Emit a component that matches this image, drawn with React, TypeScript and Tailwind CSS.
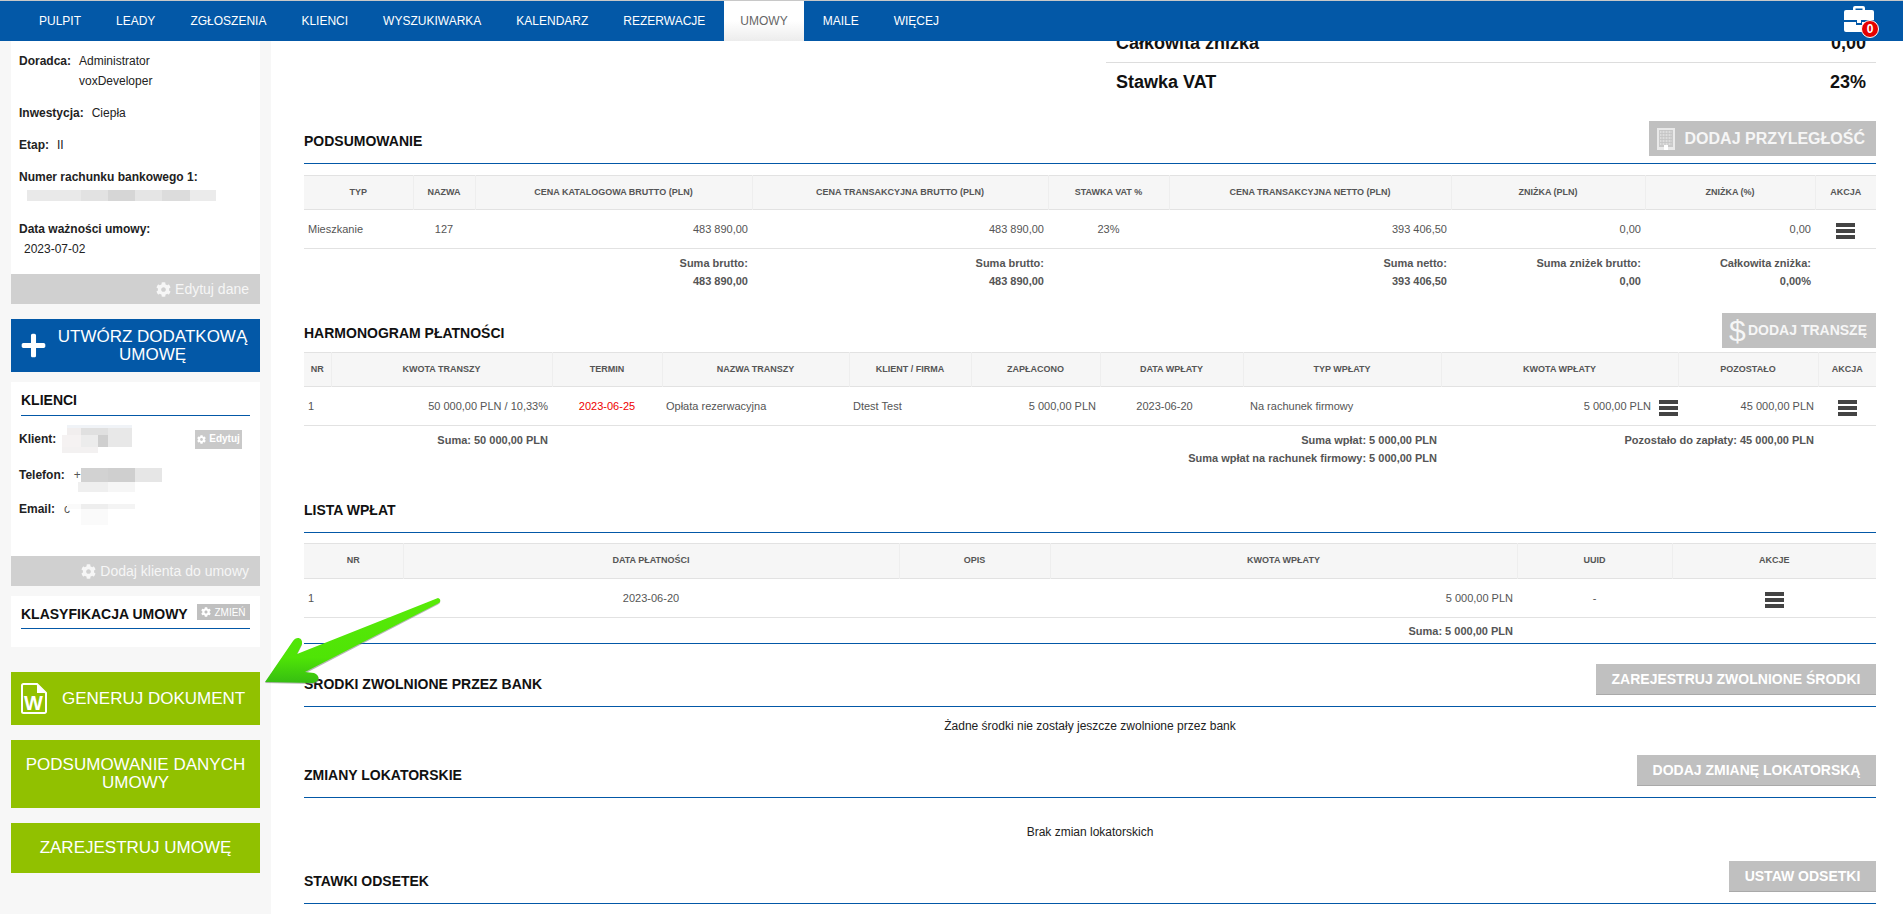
import React from 'react';
import { FaCog, FaPlus } from 'react-icons/fa';

const navItems = ['PULPIT', 'LEADY', 'ZGŁOSZENIA', 'KLIENCI', 'WYSZUKIWARKA', 'KALENDARZ', 'REZERWACJE', 'UMOWY', 'MAILE', 'WIĘCEJ'];

type Cell = [number, string];

const Mosaic = ({ rows, className }: { rows: [number, Cell[]][]; className: string }) => (
  <div className={className}>
    {rows.map(([h, cells], i) => (
      <div key={i} className="flex" style={{ height: h }}>
        {cells.map(([w, color], j) => (
          <div key={j} style={{ width: w, background: color }} />
        ))}
      </div>
    ))}
  </div>
);

const Bars = () => (
  <svg width="19" height="16" viewBox="0 0 19 16" className="inline-block mt-[4px]" fill="#444444">
    <rect y="0" width="19" height="4" />
    <rect y="6" width="19" height="4" />
    <rect y="12" width="19" height="4" />
  </svg>
);

const Th = ({ className, children }: { className: string; children?: React.ReactNode }) => (
  <th className={`bg-[#f6f6f6] border-x border-[#eeeeee] first:border-l-0 last:border-r-0 px-1 text-center align-middle text-[9px] font-bold text-[#555555] ${className}`}>
    {children}
  </th>
);

const Td = ({ className = '', children }: { className?: string; children?: React.ReactNode }) => (
  <td className={`px-1 align-middle ${className}`}>{children}</td>
);

// footer cell of a table, text starts at the top
const Foot = ({ colSpan, children }: { colSpan?: number; children?: React.ReactNode }) => (
  <td colSpan={colSpan} className="px-1 pt-[5px] align-top">{children}</td>
);

const Heading = ({ children }: { children: React.ReactNode }) => (
  <h2 className="mt-[10px] text-[14px] leading-5 font-bold text-[#111111] whitespace-nowrap">{children}</h2>
);

const GrayButton = ({ className, children }: { className: string; children: React.ReactNode }) => (
  <div className={`h-[31px] flex items-center justify-center bg-[#c0c0c0] border-b border-[#a9a9a9] text-white text-[14px] font-bold whitespace-nowrap ${className}`}>
    {children}
  </div>
);

const SideButton = ({ children }: { children: React.ReactNode }) => (
  <div className="h-[30px] pt-[1px] pr-[11px] flex items-center justify-end gap-[4px] bg-[#d0d0d0] text-[#f6f6f6] text-[14px]">
    <FaCog className="w-[15px] h-[15px]" />
    {children}
  </div>
);

const Briefcase = () => (
  <div className="relative w-[36px] h-[32px]">
    <svg width="30" height="26" viewBox="0 0 30 26" className="absolute left-[1px] top-[5px]">
      <path d="M9 5V2a2 2 0 0 1 2-2h8a2 2 0 0 1 2 2v3h-2.500V2.500h-7V5z" fill="#ffffff" />
      <path d="M2 4h26a2 2 0 0 1 2 2v8H0V6a2 2 0 0 1 2-2z" fill="#ffffff" />
      <path d="M0 16h12v3h6v-3h12v8a2 2 0 0 1-2 2H2a2 2 0 0 1-2-2z" fill="#ffffff" />
      <rect x="13" y="14" width="4" height="3" fill="#ffffff" />
    </svg>
    <div className="absolute left-[18px] top-[19px] w-[18px] h-[18px] rounded-full bg-[#e60000] border border-white flex items-center justify-center text-white text-[12px] font-bold leading-none">
      0
    </div>
  </div>
);

const BuildingIcon = () => (
  <svg width="18" height="22" viewBox="0 0 18 22" fill="none">
    <path d="M0 0h18v22h-18z" fill="#e9e9e9" />
    <rect x="2" y="2" width="14" height="17" fill="#c9c9c9" />
    <path d="M3 4h12M3 7h12M3 10h12M3 13h12M3 16h12" stroke="#f2f2f2" strokeWidth="1.200" />
    <path d="M5 2v15M8 2v15M11 2v15M14 2v15" stroke="#c4c4c4" strokeWidth="1" />
    <rect x="7" y="17" width="4" height="5" fill="#ffffff" />
  </svg>
);

const WordIcon = () => (
  <div className="relative w-[26px] h-[31px] shrink-0">
    <svg width="26" height="31" viewBox="0 0 26 31" fill="none" className="absolute inset-0">
      <path d="M2.500 1h13.500l9 9v18.500a1.500 1.500 0 0 1-1.500 1.500h-21a1.500 1.500 0 0 1-1.500-1.500v-26a1.500 1.500 0 0 1 1.500-1.500z" stroke="#ffffff" strokeWidth="2" />
      <path d="M16 1.500v8.500h8.500z" fill="#ffffff" />
    </svg>
    <span className="absolute left-[3px] top-[11px] text-white text-[20px] leading-[19px] font-bold">W</span>
  </div>
);

const Arrow = () => (
  <svg width="185" height="95" viewBox="0 0 185 95" className="absolute left-[260px] top-[595px] z-20">
    <defs>
      <linearGradient id="arrowFill" x1="0" y1="0" x2="0" y2="1">
        <stop offset="0" stopColor="#58ea08" />
        <stop offset="0.700" stopColor="#4fe406" />
        <stop offset="1" stopColor="#36bd12" />
      </linearGradient>
    </defs>
    <path d="M178 4 C181 5 181 8 178 9.500 L46 78 L54 79 C61 81 61 88 53 89 L5 88 L33 47 C36 42 43 43 42 50 L37 60z" fill="#7a7a7a" opacity="0.550" />
    <path d="M178 3 C181 4 181 7 178 8.500 L45 77 L54 78 C60 80 60 87 53 88 L5 87 L33 46 C36 41 43 42 42 49 L37 59z" fill="url(#arrowFill)" />
  </svg>
);

const SummaryLines = ({ lines }: { lines: string[] }) => (
  <div className="text-[11px] leading-[18px] font-bold text-[#555555] text-right">
    {lines.map((l) => (
      <div key={l}>{l}</div>
    ))}
  </div>
);

const App = () => {
  return (
    <div className="relative h-[914px] overflow-hidden bg-white font-['Liberation_Sans',sans-serif] text-[12px] text-[#222222]">
      {/* Top menu */}
      <nav className="h-[41px] border-t border-[#c8c8c8] bg-[#0358a7] pl-[23px] pr-[24px] flex items-stretch gap-[3px] text-[12px] text-white relative z-10">
        {navItems.map((item) => (
          <div
            key={item}
            className={
              item === 'UMOWY'
                ? 'px-4 flex items-center bg-gradient-to-b from-white via-white to-[#ececec] text-[#666666]'
                : 'px-4 flex items-center'
            }
          >
            {item}
          </div>
        ))}
        <div className="ml-auto">
          <Briefcase />
        </div>
      </nav>

      <div className="flex h-[873px]">
        {/* Left column */}
        <aside className="w-[271px] shrink-0 bg-[#f7f7f7] px-[11px]">
          <div className="bg-white">
            <div className="pt-[10px] pb-[15px] pl-[8px] leading-5">
              <div className="mb-3">
                <div className="flex">
                  <b className="w-[60px]">Doradca:</b>
                  <span>Administrator</span>
                </div>
                <div className="pl-[60px]">voxDeveloper</div>
              </div>
              <div className="mb-3">
                <b>Inwestycja:</b>
                <span className="ml-[8px]">Ciepła</span>
              </div>
              <div className="mb-3">
                <b>Etap:</b>
                <span className="ml-[8px]">II</span>
              </div>
              <div className="mb-3">
                <b className="block">Numer rachunku bankowego 1:</b>
                <div className="h-5 pt-[3px]">
                  <Mosaic
                    className="ml-[8px]"
                    rows={[
                      [
                        11,
                        [
                          [54, '#e9e9e9'],
                          [27, '#e2e2e2'],
                          [27, '#d6d6d6'],
                          [27, '#e5e5e5'],
                          [28, '#dcdcdc'],
                          [26, '#ebebeb'],
                        ],
                      ],
                    ]}
                  />
                </div>
              </div>
              <div>
                <b className="block">Data ważności umowy:</b>
                <div className="pl-[5px]">2023-07-02</div>
              </div>
            </div>
            <SideButton>Edytuj dane</SideButton>
          </div>

          <div className="mt-[15px] h-[53px] bg-[#0358a7] text-white pl-[9px] pr-[11px] flex items-center gap-[9px]">
            <FaPlus className="w-[27px] h-[27px] shrink-0" />
            <div className="flex-1 text-center text-[17px] leading-[18px] whitespace-nowrap">
              UTWÓRZ DODATKOWĄ
              <br />
              UMOWĘ
            </div>
          </div>

          <div className="mt-[10px] bg-white">
            <div className="h-[174px]">
              <div className="mx-[10px] pt-[8px] pb-[5px] border-b border-[#0358a7] text-[14px] leading-5 font-bold text-[#111111]">KLIENCI</div>
              <div className="relative ml-[8px] mr-[18px] mt-[13px] h-5 leading-5 flex justify-between items-center">
                <b>Klient:</b>
                <Mosaic
                  className="absolute left-[43px] top-[-4px]"
                  rows={[
                    [3, [[5, 'transparent'], [65, '#f0f3f7']]],
                    [7, [[5, 'transparent'], [14, '#f1eeee'], [27, '#e0e0e0'], [24, '#e8e8e8']]],
                    [12, [[19, '#f5f2f2'], [17, '#ececec'], [10, '#cfcfcf'], [24, '#e8e8e8']]],
                    [6, [[36, '#f3f1f1']]],
                  ]}
                />
                <div className="w-[47px] h-[19px] bg-[#c9c9c9] text-white text-[10px] font-bold flex items-center justify-center gap-[3px]">
                  <FaCog className="w-[9px] h-[9px]" />
                  Edytuj
                </div>
              </div>
              <div className="relative ml-[8px] mt-[16px] h-5 leading-5">
                <b>Telefon:</b>
                <span className="ml-[9px] text-[#555555]">+</span>
                <Mosaic
                  className="absolute left-[59px] top-[3px]"
                  rows={[
                    [14, [[3, 'transparent'], [27, '#d2d2d2'], [27, '#cfcfcf'], [27, '#e6e6e6']]],
                    [10, [[30, '#efefef'], [27, '#f6f6f6']]],
                  ]}
                />
              </div>
              <div className="relative ml-[8px] mt-[14px] h-5 leading-5">
                <b>Email:</b>
                <span className="ml-[9px] text-[#555555]">c</span>
                <Mosaic
                  className="absolute left-[48px] top-[5px]"
                  rows={[
                    [5, [[14, '#fafafa'], [27, '#eeeeee'], [27, '#f4f4f4']]],
                    [16, [[14, 'transparent'], [27, '#fafafa']]],
                  ]}
                />
              </div>
            </div>
            <SideButton>Dodaj klienta do umowy</SideButton>
          </div>

          <div className="mt-[10px] h-[51px] bg-white pt-[9px] px-[10px]">
            <div className="h-[24px] border-b border-[#0358a7] flex justify-between items-start">
              <span className="text-[14px] leading-[18px] font-bold text-[#111111] whitespace-nowrap">KLASYFIKACJA UMOWY</span>
              <div className="-mt-[1px] w-[53px] h-[16px] bg-[#c0c0c0] text-white text-[10px] flex items-center justify-center gap-[3px]">
                <FaCog className="w-[10px] h-[10px]" />
                ZMIEŃ
              </div>
            </div>
          </div>

          <div className="mt-[25px] h-[53px] bg-[#91c100] text-white pl-[10px] flex items-center gap-[15px] text-[17px]">
            <WordIcon />
            GENERUJ DOKUMENT
          </div>
          <div className="mt-[15px] h-[68px] bg-[#91c100] text-white flex items-center justify-center text-center text-[17px] leading-[18px] px-[10px]">
            PODSUMOWANIE DANYCH UMOWY
          </div>
          <div className="mt-[15px] h-[50px] bg-[#91c100] text-white flex items-center justify-center text-[17px]">
            ZAREJESTRUJ UMOWĘ
          </div>
        </aside>

        {/* Main content */}
        <main className="flex-1 min-w-0 pl-[33px] pr-[27px] text-[11px] text-[#555555]">
          <div className="ml-[802px] text-[#111111] font-bold text-[18px]">
            <div className="h-[22px] overflow-hidden border-b border-[#dddddd] px-[10px]">
              <div className="-mt-[9px] leading-[22px] flex justify-between">
                <span>Całkowita zniżka</span>
                <span>0,00</span>
              </div>
            </div>
            <div className="h-[38px] px-[10px] flex justify-between items-center">
              <span>Stawka VAT</span>
              <span>23%</span>
            </div>
          </div>

          {/* Podsumowanie */}
          <div className="mt-[20px] h-[43px] border-b border-[#0358a7] flex justify-between items-start">
            <Heading>PODSUMOWANIE</Heading>
            <div className="w-[227px] h-[35px] pl-[8px] pr-[11px] flex items-center justify-between bg-[#c0c0c0] text-[#f6f6f6] text-[16px] font-bold whitespace-nowrap">
              <BuildingIcon />
              DODAJ PRZYLEGŁOŚĆ
            </div>
          </div>
          <table className="mt-[11px] w-full table-fixed border-collapse">
            <thead>
              <tr className="h-[34px] border-y border-[#e2e2e2]">
                <Th className="w-[109px]">TYP</Th>
                <Th className="w-[62px]">NAZWA</Th>
                <Th className="w-[277px]">CENA KATALOGOWA BRUTTO (PLN)</Th>
                <Th className="w-[296px]">CENA TRANSAKCYJNA BRUTTO (PLN)</Th>
                <Th className="w-[121px]">STAWKA VAT %</Th>
                <Th className="w-[282px]">CENA TRANSAKCYJNA NETTO (PLN)</Th>
                <Th className="w-[194px]">ZNIŻKA (PLN)</Th>
                <Th className="w-[170px]">ZNIŻKA (%)</Th>
                <Th className="w-[61px]">AKCJA</Th>
              </tr>
            </thead>
            <tbody>
              <tr className="h-[39px] border-b border-[#e2e2e2]">
                <Td>Mieszkanie</Td>
                <Td className="text-center">127</Td>
                <Td className="text-right">483 890,00</Td>
                <Td className="text-right">483 890,00</Td>
                <Td className="text-center">23%</Td>
                <Td className="text-right">393 406,50</Td>
                <Td className="text-right">0,00</Td>
                <Td className="text-right">0,00</Td>
                <Td className="text-center"><Bars /></Td>
              </tr>
            </tbody>
            <tfoot>
              <tr>
                <Foot colSpan={2} />
                <Foot><SummaryLines lines={['Suma brutto:', '483 890,00']} /></Foot>
                <Foot><SummaryLines lines={['Suma brutto:', '483 890,00']} /></Foot>
                <Foot />
                <Foot><SummaryLines lines={['Suma netto:', '393 406,50']} /></Foot>
                <Foot><SummaryLines lines={['Suma zniżek brutto:', '0,00']} /></Foot>
                <Foot><SummaryLines lines={['Całkowita zniżka:', '0,00%']} /></Foot>
                <Foot />
              </tr>
            </tfoot>
          </table>

          {/* Harmonogram */}
          <div className="mt-[23px] flex justify-between items-start">
            <Heading>HARMONOGRAM PŁATNOŚCI</Heading>
            <div className="w-[154px] h-[35px] pl-[7px] pr-[9px] flex items-center justify-between bg-[#c0c0c0] text-[#f6f6f6] text-[14px] font-bold whitespace-nowrap">
              <span className="text-[30px] leading-none font-normal">$</span>
              DODAJ TRANSZĘ
            </div>
          </div>
          <table className="mt-[4px] w-full table-fixed border-collapse">
            <thead>
              <tr className="h-[34px] border-y border-[#e2e2e2]">
                <Th className="w-[27px]">NR</Th>
                <Th className="w-[221px]">KWOTA TRANSZY</Th>
                <Th className="w-[110px]">TERMIN</Th>
                <Th className="w-[187px]">NAZWA TRANSZY</Th>
                <Th className="w-[122px]">KLIENT / FIRMA</Th>
                <Th className="w-[129px]">ZAPŁACONO</Th>
                <Th className="w-[143px]">DATA WPŁATY</Th>
                <Th className="w-[198px]">TYP WPŁATY</Th>
                <Th className="w-[237px]">KWOTA WPŁATY</Th>
                <Th className="w-[140px]">POZOSTAŁO</Th>
                <Th className="w-[58px]">AKCJA</Th>
              </tr>
            </thead>
            <tbody>
              <tr className="h-[39px] border-b border-[#e2e2e2]">
                <Td>1</Td>
                <Td className="text-right">50 000,00 PLN / 10,33%</Td>
                <Td className="text-center text-[#ee0000]">2023-06-25</Td>
                <Td>Opłata rezerwacyjna</Td>
                <Td>Dtest Test</Td>
                <Td className="text-right">5 000,00 PLN</Td>
                <Td className="text-center pr-[18px]">2023-06-20</Td>
                <Td className="pl-[7px]">Na rachunek firmowy</Td>
                <td className="align-middle">
                  <div className="flex justify-end items-center gap-[8px]">
                    5 000,00 PLN
                    <Bars />
                  </div>
                </td>
                <Td className="text-right">45 000,00 PLN</Td>
                <Td className="text-center"><Bars /></Td>
              </tr>
            </tbody>
            <tfoot>
              <tr>
                <Foot colSpan={2}><SummaryLines lines={['Suma: 50 000,00 PLN']} /></Foot>
                <Foot colSpan={2} />
                <Foot colSpan={4}>
                  <SummaryLines lines={['Suma wpłat: 5 000,00 PLN', 'Suma wpłat na rachunek firmowy: 5 000,00 PLN']} />
                </Foot>
                <Foot colSpan={2}>
                  <SummaryLines lines={['Pozostało do zapłaty: 45 000,00 PLN']} />
                </Foot>
                <Foot />
              </tr>
            </tfoot>
          </table>

          {/* Lista wpłat */}
          <div className="mt-[23px] h-[43px] border-b border-[#0358a7] flex items-start">
            <Heading>LISTA WPŁAT</Heading>
          </div>
          <table className="mt-[10px] w-full table-fixed border-collapse">
            <thead>
              <tr className="h-[35px] border-y border-[#e2e2e2]">
                <Th className="w-[99px]">NR</Th>
                <Th className="w-[496px]">DATA PŁATNOŚCI</Th>
                <Th className="w-[151px]">OPIS</Th>
                <Th className="w-[467px]">KWOTA WPŁATY</Th>
                <Th className="w-[155px]">UUID</Th>
                <Th className="w-[204px]">AKCJE</Th>
              </tr>
            </thead>
            <tbody>
              <tr className="h-[39px] border-b border-[#e2e2e2]">
                <Td>1</Td>
                <Td className="text-center">2023-06-20</Td>
                <Td />
                <Td className="text-right">5 000,00 PLN</Td>
                <Td className="text-center">-</Td>
                <Td className="text-center"><Bars /></Td>
              </tr>
            </tbody>
            <tfoot>
              <tr className="h-[26px] border-b border-[#0358a7]">
                <td colSpan={4} className="px-1">
                  <SummaryLines lines={['Suma: 5 000,00 PLN']} />
                </td>
                <td colSpan={2} />
              </tr>
            </tfoot>
          </table>

          {/* Środki zwolnione */}
          <div className="mt-[20px] h-[43px] border-b border-[#0358a7] flex justify-between items-start">
            <Heading>ŚRODKI ZWOLNIONE PRZEZ BANK</Heading>
            <GrayButton className="w-[280px]">ZAREJESTRUJ ZWOLNIONE ŚRODKI</GrayButton>
          </div>
          <div className="mt-[9px] text-[12px] leading-5 text-center text-[#222222]">Żadne środki nie zostały jeszcze zwolnione przez bank</div>

          {/* Zmiany lokatorskie */}
          <div className="mt-[19px] h-[43px] border-b border-[#0358a7] flex justify-between items-start">
            <Heading>ZMIANY LOKATORSKIE</Heading>
            <GrayButton className="w-[239px]">DODAJ ZMIANĘ LOKATORSKĄ</GrayButton>
          </div>
          <div className="mt-[24px] text-[12px] leading-5 text-center text-[#222222]">Brak zmian lokatorskich</div>

          {/* Stawki odsetek */}
          <div className="mt-[19px] h-[43px] border-b border-[#0358a7] flex justify-between items-start">
            <Heading>STAWKI ODSETEK</Heading>
            <GrayButton className="w-[147px]">USTAW ODSETKI</GrayButton>
          </div>
        </main>
      </div>

      <Arrow />
    </div>
  );
};

export default App;
